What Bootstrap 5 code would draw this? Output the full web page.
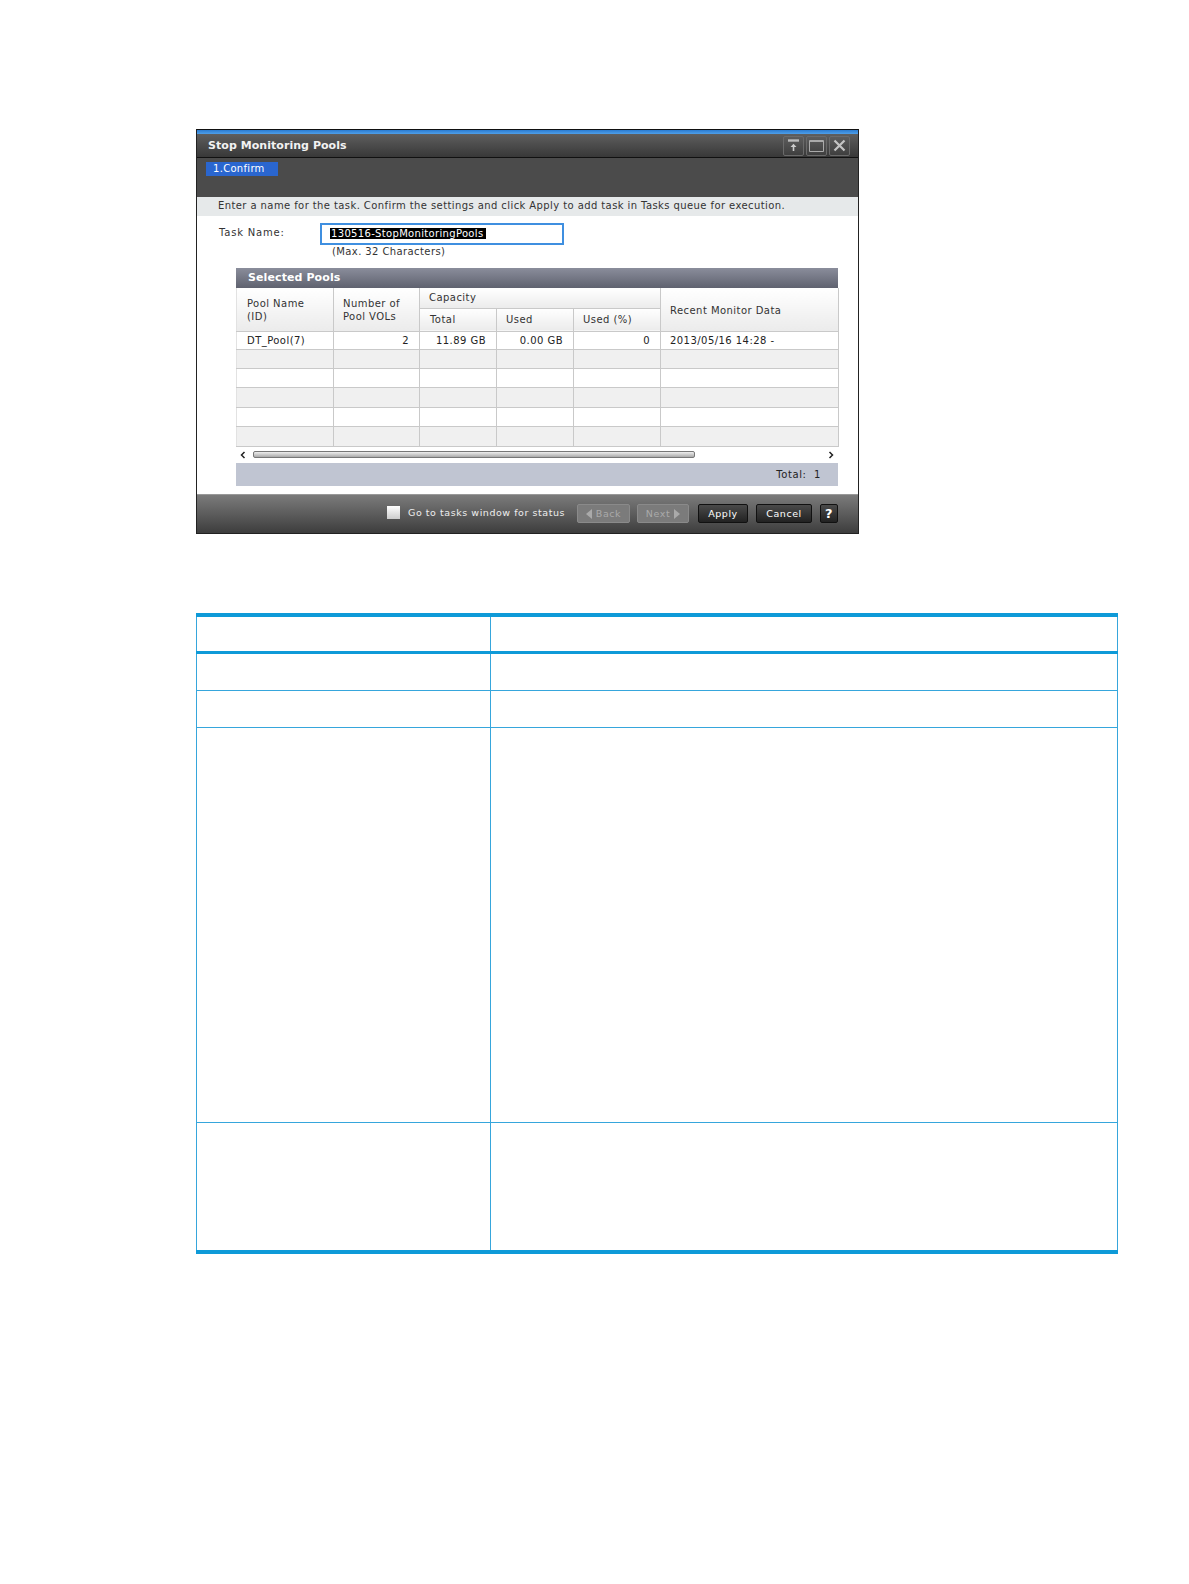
<!DOCTYPE html>
<html lang="en">
<head>
<meta charset="utf-8">
<title>Stop Monitoring Pools</title>
<link rel="stylesheet" href="https://cdn.jsdelivr.net/npm/bootstrap@5.3.0/dist/css/bootstrap.min.css">
<style>
body { background:#fff; font-family:"DejaVu Sans",sans-serif; }
.page-wrap { padding:129px 72px 0 196px; }
.win { width:663px; height:405px; border:1px solid #222; border-top-color:#111; }
.win > * { flex:none; }
.win-accent { height:4px; background:linear-gradient(#2a7bd0,#4f9fe8); }
.win-title { height:24px; padding:0 8px 0 11px; background:linear-gradient(#5e5e5e,#383838); border-bottom:1px solid #111; color:#f2f2f2; font-weight:700; font-size:11px; letter-spacing:.05px; }
.title-text { padding-top:2px; }
.win-btn { width:21px; height:20px; border:1px solid #6a6a6a; border-radius:2px; background:linear-gradient(#5c5c5c,#3f3f3f); }
.win-btns { gap:2px; }
.win-steps { height:39px; padding:4px 9px; background:#4b4b4b; }
.step-pill { width:72px; height:14px; background:#2a66cf; color:#fff; font-size:10px; line-height:14px; padding-left:7px; letter-spacing:.3px; }
.win-hint { height:19px; background:#e6e9ea; color:#333; font-size:10px; line-height:18px; padding-left:21px; letter-spacing:.41px; white-space:nowrap; }
.task-row { height:52px; padding-left:22px; color:#333; font-size:10px; letter-spacing:.4px; }
.task-label { width:101px; padding-top:9px; letter-spacing:.8px; }
.task-input { width:244px; height:22px; margin-top:7px; border:2px solid #3f8fe0; padding:1px 8px; }
.task-sel { display:inline-block; background:#000; color:#fff; height:11px; line-height:11px; padding:0 1px; width:156px; letter-spacing:.33px; white-space:nowrap; }
.task-note { padding:0 0 0 12px; margin-top:-1px; }
.pool-box { width:602px; margin-left:39px; }
.pool-head { height:20px; padding-left:12px; background:linear-gradient(#8a8d9b,#5f626f); color:#fff; font-weight:700; font-size:11px; line-height:20px; letter-spacing:.1px; }
.pool-table { table-layout:fixed; width:602px; margin:0; border-collapse:collapse; font-size:10px; letter-spacing:.45px; color:#333; }
.pool-table th, .pool-table td { padding:0 10px 0 9px; border:1px solid #c9c9c9; font-weight:400; background:#fff; vertical-align:middle; box-shadow:none; white-space:nowrap; }
.pool-table thead th { background:linear-gradient(#fff,#ebebeb); line-height:13px; border-top:0; }
.pool-table thead th[rowspan] { padding-top:2px; }
.pool-table tr > :first-child { border-left:1px solid #e2e2e2; padding-left:10px; }
.pool-table tr > :last-child { border-right:1px solid #c9c9c9; }
.row-first td { height:18px; background:#fff; color:#222; }
.row-blank td { height:19px; }
.row-blank.row-tall td { height:20px; }
.pool-table .row-alt td { background:#f0f0f0; }
.head-top th { height:20px; }
.head-sub th { height:23px; }
.scroll-strip { height:16px; padding:0 4px; background:#fff; }
.scroll-thumb { width:442px; height:7px; margin-left:7px; border:1px solid #777; border-radius:2px; background:linear-gradient(#eee,#aaa); }
.pool-total { height:23px; background:#c0c5d2; color:#222; font-size:10px; letter-spacing:.6px; padding-right:17px; line-height:23px; text-align:right; }
.win-foot { height:39px; margin-top:auto; padding:9px 0 0 190px; background:linear-gradient(#7b7b7b,#3d3d3d); border-top:1px solid #999; color:#eee; font-size:9.5px; letter-spacing:.55px; }
.fake-check { width:13px; height:13px; background:linear-gradient(#fff,#ccc); margin-top:2px; margin-right:8px; }
.go-text { width:169px; padding-top:2px; white-space:nowrap; }
.foot-btn { height:19px; border-radius:2px; line-height:18px; text-align:center; }
.foot-off { background:#7b7b7b; border:1px solid #8a8a8a; color:#aaa; }
.foot-on { background:linear-gradient(#4a4a4a,#222); border:1px solid #111; color:#fff; }
.w-back { width:53px; margin-right:7px; }
.w-next { width:52px; margin-right:9px; }
.w-apply { width:50px; margin-right:8px; }
.w-cancel { width:56px; margin-right:8px; }
.w-help { width:18px; font-weight:700; font-size:13px; line-height:17px; }
.doc-table { width:921px; margin:79px 0 0; border-collapse:collapse; table-layout:fixed; }
.doc-table th, .doc-table td { border:1px solid #36a6dc; background:#fff; padding:0; box-shadow:none; }
.doc-table thead th { border-top:4px solid #0e9ad8; border-bottom:3px solid #0e9ad8; height:37px; }
.doc-table tbody tr:last-child td { border-bottom:4px solid #0e9ad8; }
.doc-r1 td { height:38px; }
.doc-r2 td { height:37px; }
.doc-r3 td { height:395px; }
.doc-r4 td { height:130px; }
</style>
</head>
<body>
<div class="page-wrap">
  <div class="win d-flex flex-column">
    <div class="win-accent"></div>
    <div class="win-title d-flex align-items-center justify-content-between">
      <span class="title-text">Stop Monitoring Pools</span>
      <div class="d-flex win-btns">
        <div class="win-btn d-flex align-items-center justify-content-center"><svg width="13" height="13" viewBox="0 0 13 13"><path d="M1 1.5h11" stroke="#bbb" stroke-width="2.4"/><path d="M6.5 12V7" stroke="#ccc" stroke-width="1.6"/><path d="M3.5 8l3-3.2 3 3.2z" fill="#ccc"/></svg></div>
        <div class="win-btn d-flex align-items-center justify-content-center"><svg width="15" height="12" viewBox="0 0 15 12"><path d="M.5.5h14v11H.5z" fill="none" stroke="#aaa"/><path d="M1 1.5h13" stroke="#aaa"/></svg></div>
        <div class="win-btn d-flex align-items-center justify-content-center"><svg width="13" height="13" viewBox="0 0 13 13"><path d="M1.5 1.5l10 10M11.5 1.5l-10 10" stroke="#c4c4c4" stroke-width="2.2"/></svg></div>
      </div>
    </div>
    <div class="win-steps"><div class="step-pill">1.Confirm</div></div>
    <div class="win-hint">Enter a name for the task. Confirm the settings and click Apply to add task in Tasks queue for execution.</div>
    <div class="task-row d-flex">
      <div class="task-label">Task Name:</div>
      <div>
        <div class="task-input"><span class="task-sel">130516-StopMonitoringPools</span></div>
        <div class="task-note">(Max. 32 Characters)</div>
      </div>
    </div>
    <div class="pool-box">
      <div class="pool-head">Selected Pools</div>
      <table class="table pool-table">
        <colgroup><col style="width:97px"><col style="width:86px"><col style="width:77px"><col style="width:77px"><col style="width:87px"><col style="width:178px"></colgroup>
        <thead>
          <tr class="head-top">
            <th rowspan="2">Pool Name<br>(ID)</th>
            <th rowspan="2">Number of<br>Pool VOLs</th>
            <th colspan="3">Capacity</th>
            <th rowspan="2">Recent Monitor Data</th>
          </tr>
          <tr class="head-sub"><th>Total</th><th>Used</th><th>Used (%)</th></tr>
        </thead>
        <tbody>
          <tr class="row-first"><td>DT_Pool(7)</td><td class="text-end">2</td><td class="text-end">11.89 GB</td><td class="text-end">0.00 GB</td><td class="text-end">0</td><td>2013/05/16 14:28 -</td></tr>
          <tr class="row-blank row-alt"><td></td><td></td><td></td><td></td><td></td><td></td></tr>
          <tr class="row-blank"><td></td><td></td><td></td><td></td><td></td><td></td></tr>
          <tr class="row-blank row-tall row-alt"><td></td><td></td><td></td><td></td><td></td><td></td></tr>
          <tr class="row-blank"><td></td><td></td><td></td><td></td><td></td><td></td></tr>
          <tr class="row-blank row-tall row-alt"><td></td><td></td><td></td><td></td><td></td><td></td></tr>
        </tbody>
      </table>
      <div class="scroll-strip d-flex align-items-center justify-content-between">
        <div class="d-flex align-items-center">
          <svg width="6" height="8" viewBox="0 0 6 8"><path d="M4.5 1L1.5 4l3 3" fill="none" stroke="#222" stroke-width="1.5"/></svg>
          <div class="scroll-thumb"></div>
        </div>
        <svg width="6" height="8" viewBox="0 0 6 8"><path d="M1.5 1l3 3-3 3" fill="none" stroke="#222" stroke-width="1.5"/></svg>
      </div>
      <div class="pool-total">Total:&nbsp; 1</div>
    </div>
    <div class="win-foot d-flex">
      <div class="fake-check"></div>
      <div class="go-text">Go to tasks window for status</div>
      <div class="foot-btn foot-off w-back d-flex align-items-center justify-content-center gap-1"><svg width="6" height="10" viewBox="0 0 6 10"><path d="M6 0v10L0 5z" fill="#aaa"/></svg><span>Back</span></div>
      <div class="foot-btn foot-off w-next d-flex align-items-center justify-content-center gap-1"><span>Next</span><svg width="6" height="10" viewBox="0 0 6 10"><path d="M0 0v10l6-5z" fill="#aaa"/></svg></div>
      <div class="foot-btn foot-on w-apply">Apply</div>
      <div class="foot-btn foot-on w-cancel">Cancel</div>
      <div class="foot-btn foot-on w-help">?</div>
    </div>
  </div>
  <table class="table doc-table">
    <colgroup><col style="width:294px"><col style="width:627px"></colgroup>
    <thead><tr><th></th><th></th></tr></thead>
    <tbody>
      <tr class="doc-r1"><td></td><td></td></tr>
      <tr class="doc-r2"><td></td><td></td></tr>
      <tr class="doc-r3"><td></td><td></td></tr>
      <tr class="doc-r4"><td></td><td></td></tr>
    </tbody>
  </table>
</div>
</body>
</html>
